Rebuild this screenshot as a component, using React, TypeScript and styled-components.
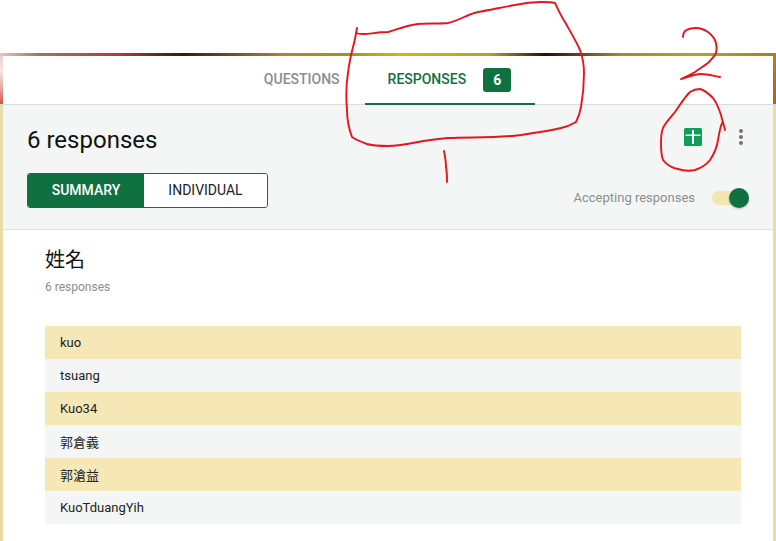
import React from "react";
import styled, { createGlobalStyle } from "styled-components";

const GlobalStyle = createGlobalStyle`
  html, body {
    margin: 0;
    padding: 0;
    background: #fff;
  }
  body {
    font-family: Roboto, "Noto Sans CJK TC", sans-serif;
    overflow: hidden;
  }
`;

const Page = styled.div`
  position: relative;
  width: 776px;
  height: 541px;
  padding-top: 53px;
  box-sizing: border-box;
  display: flex;
  flex-direction: column;
`;

const ThemeStrip = styled.div`
  height: 3px;
  background: linear-gradient(
    90deg,
    #e8c4bc 0,
    #a9705a 40px,
    #b03c2a 120px,
    #3c1a08 183px,
    #c67a2a 283px,
    #b09012 350px,
    #d4b418 400px,
    #c69c20 490px,
    #2a0d05 545px,
    #a88a22 620px,
    #b8a030 700px,
    #b87818 776px
  );
`;

const TabBar = styled.nav`
  height: 48px;
  display: flex;
  justify-content: center;
  gap: 1px;
  border-bottom: 1px solid #d9dedb;
  background:
    linear-gradient(#e8d0cc, #f5e8e6 30%, #e8a09a 70%, #d8503e) left / 3px 100% no-repeat,
    linear-gradient(#b08020, #a8641a) right / 3px 100% no-repeat,
    #fff;
`;

const Tab = styled.div<{ $active?: boolean }>`
  display: flex;
  align-items: center;
  gap: 17px;
  padding: 0 24px 0 23px;
  font-size: 14px;
  font-weight: 500;
  color: ${(p) => (p.$active ? "#0f7140" : "#8c8c8c")};
  border-bottom: 2px solid ${(p) => (p.$active ? "#0f7140" : "transparent")};
  margin-bottom: -1px;
`;

const TabLabel = styled.span`
  margin-bottom: 2px;
`;

const Badge = styled.span`
  width: 28px;
  height: 24px;
  border-radius: 3px;
  background: #0f7140;
  color: #fff;
  font-size: 14px;
  font-weight: 700;
  display: flex;
  align-items: center;
  justify-content: center;
`;

const Content = styled.main`
  flex: 1;
  border-left: 3px solid #e9dba6;
  border-right: 3px solid #e9dba6;
  display: flex;
  flex-direction: column;
`;

const SummaryBand = styled.section`
  height: 125px;
  box-sizing: border-box;
  background: #f3f6f4;
  border-bottom: 1px solid #dde1de;
  padding: 0 24px;
  display: flex;
  justify-content: space-between;
`;

const BandColumn = styled.div`
  display: flex;
  flex-direction: column;
`;

const ResponseCount = styled.h1`
  margin: 20px 0 18px;
  font-size: 24px;
  line-height: 30px;
  font-weight: 400;
  color: #111;
`;

const Segments = styled.div`
  display: flex;
  width: 241px;
  height: 35px;
  box-sizing: border-box;
  border: 1px solid #0f7140;
  border-radius: 3px;
  overflow: hidden;
`;

const Segment = styled.div<{ $active?: boolean; $width: number }>`
  width: ${(p) => p.$width}px;
  padding-bottom: 2px;
  box-sizing: border-box;
  display: flex;
  align-items: center;
  justify-content: center;
  font-size: 14px;
  background: ${(p) => (p.$active ? "#0f7140" : "#fff")};
  color: ${(p) => (p.$active ? "#fff" : "#222")};
  font-weight: ${(p) => (p.$active ? 500 : 400)};
`;

const BandRight = styled.div`
  display: flex;
  flex-direction: column;
  align-items: flex-end;
`;

const ActionIcons = styled.div`
  display: flex;
  align-items: center;
  gap: 36px;
  margin-top: 23px;
  margin-right: 5px;
`;

const AcceptRow = styled.div`
  display: flex;
  align-items: center;
  gap: 17px;
  margin-top: 44px;
`;

const AcceptLabel = styled.span`
  font-size: 13px;
  color: #8a8f8c;
`;

const SwitchTrack = styled.div`
  position: relative;
  width: 37px;
  height: 14px;
  border-radius: 7px;
  background: #f3e6b0;
`;

const SwitchThumb = styled.div`
  position: absolute;
  top: -3px;
  right: 0;
  width: 20px;
  height: 20px;
  border-radius: 50%;
  background: #0f7140;
  box-shadow: 0 1px 2px rgba(0, 0, 0, 0.25);
`;

const Question = styled.section`
  padding: 16px 32px 0 42px;
`;

const QuestionTitle = styled.h2`
  margin: 0;
  font-size: 20px;
  line-height: 28px;
  font-weight: 400;
  color: #111;
`;

const QuestionMeta = styled.div`
  margin-top: 5px;
  font-size: 12px;
  line-height: 16px;
  color: #8c8c8c;
`;

const AnswerList = styled.div`
  margin-top: 31px;
`;

const Answer = styled.div<{ $tinted: boolean }>`
  height: 33px;
  display: flex;
  align-items: center;
  padding-left: 15px;
  font-size: 13px;
  color: #222;
  background: ${(p) => (p.$tinted ? "#f5e8b6" : "#f3f6f4")};
`;

const Scribbles = styled.svg`
  position: absolute;
  inset: 0;
  pointer-events: none;
`;

const answers = ["kuo", "tsuang", "Kuo34", "郭倉義", "郭滄益", "KuoTduangYih"];

const SheetsIcon = () => (
  <svg width="18" height="18" viewBox="0 0 18 18">
    <rect width="18" height="18" rx="1.5" fill="#0f9d58" />
    <path d="M8 2h2v4.500h6.500v1.500H10v8H8V8H1.500V6.500H8z" fill="#fff" />
  </svg>
);

const MoreIcon = () => (
  <svg width="6" height="18" viewBox="0 0 6 18">
    <circle cx="3" cy="3" r="2" fill="#6f7672" />
    <circle cx="3" cy="9" r="2" fill="#6f7672" />
    <circle cx="3" cy="15" r="2" fill="#6f7672" />
  </svg>
);

const App: React.FC = () => {
  return (
    <Page>
      <GlobalStyle />
      <ThemeStrip />
      <TabBar>
        <Tab>
          <TabLabel>QUESTIONS</TabLabel>
        </Tab>
        <Tab $active>
          <TabLabel>RESPONSES</TabLabel>
          <Badge>6</Badge>
        </Tab>
      </TabBar>
      <Content>
        <SummaryBand>
          <BandColumn>
            <ResponseCount>6 responses</ResponseCount>
            <Segments>
              <Segment $active $width={116}>
                SUMMARY
              </Segment>
              <Segment $width={123}>INDIVIDUAL</Segment>
            </Segments>
          </BandColumn>
          <BandRight>
            <ActionIcons>
              <SheetsIcon />
              <MoreIcon />
            </ActionIcons>
            <AcceptRow>
              <AcceptLabel>Accepting responses</AcceptLabel>
              <SwitchTrack>
                <SwitchThumb />
              </SwitchTrack>
            </AcceptRow>
          </BandRight>
        </SummaryBand>
        <Question>
          <QuestionTitle>姓名</QuestionTitle>
          <QuestionMeta>6 responses</QuestionMeta>
          <AnswerList>
            {answers.map((answer, i) => (
              <Answer key={answer} $tinted={i % 2 === 0}>
                {answer}
              </Answer>
            ))}
          </AnswerList>
        </Question>
      </Content>
      <Scribbles width="776" height="541" viewBox="0 0 776 541" fill="none" stroke="#e8141c" strokeWidth="1.9" strokeLinecap="round" strokeLinejoin="round">
        <path d="M357 28L356 33C360 35 367 34 375 33C380 32 384 32 388 32C398 29 408 25 418 24C428 23 438 24 448 23C458 21 468 14 478 12C490 10 503 7 515 5C524 3 533 2 541 2C546 2 551 2 555 3C558 9 561 16 565 22C570 31 576 41 580 50C583 58 584 66 584 73C584 85 583 96 581 107C580 113 578 118 576 122C571 125 566 127 561 128C548 131 534 133 521 135C497 138 472 137 448 138C438 139 428 140 418 142C408 144 398 146 388 146C381 146 374 146 367 144C362 142 356 140 352 137C349 129 347 119 347 110C346 98 346 85 348 73C349 64 351 55 353 47C355 40 356 34 357 28" />
        <path d="M444 151C445 156 446 162 446 167C447 172 447 177 447 182" />
        <path d="M683 37C683 34 684 32 685 31C688 29 692 28 696 28C700 28 705 30 708 32C712 35 715 39 716 43C717 47 717 50 716 53C714 57 711 60 708 63C704 66 699 69 695 72C690 75 685 77 681 79C686 78 694 74 701 74C707 74 714 76 720 77" />
        <path d="M725 130C724 125 722 120 721 115C719 109 717 103 713 98C709 94 705 90 700 89C696 89 693 90 690 92C684 98 680 105 675 112C671 117 666 122 663 128C661 133 661 138 661 143C661 149 661 155 663 160C667 165 672 168 678 169C684 171 690 171 695 170C701 168 706 165 710 160C714 154 717 147 718 140C719 134 720 128 722 123" />
      </Scribbles>
    </Page>
  );
};

export default App;
